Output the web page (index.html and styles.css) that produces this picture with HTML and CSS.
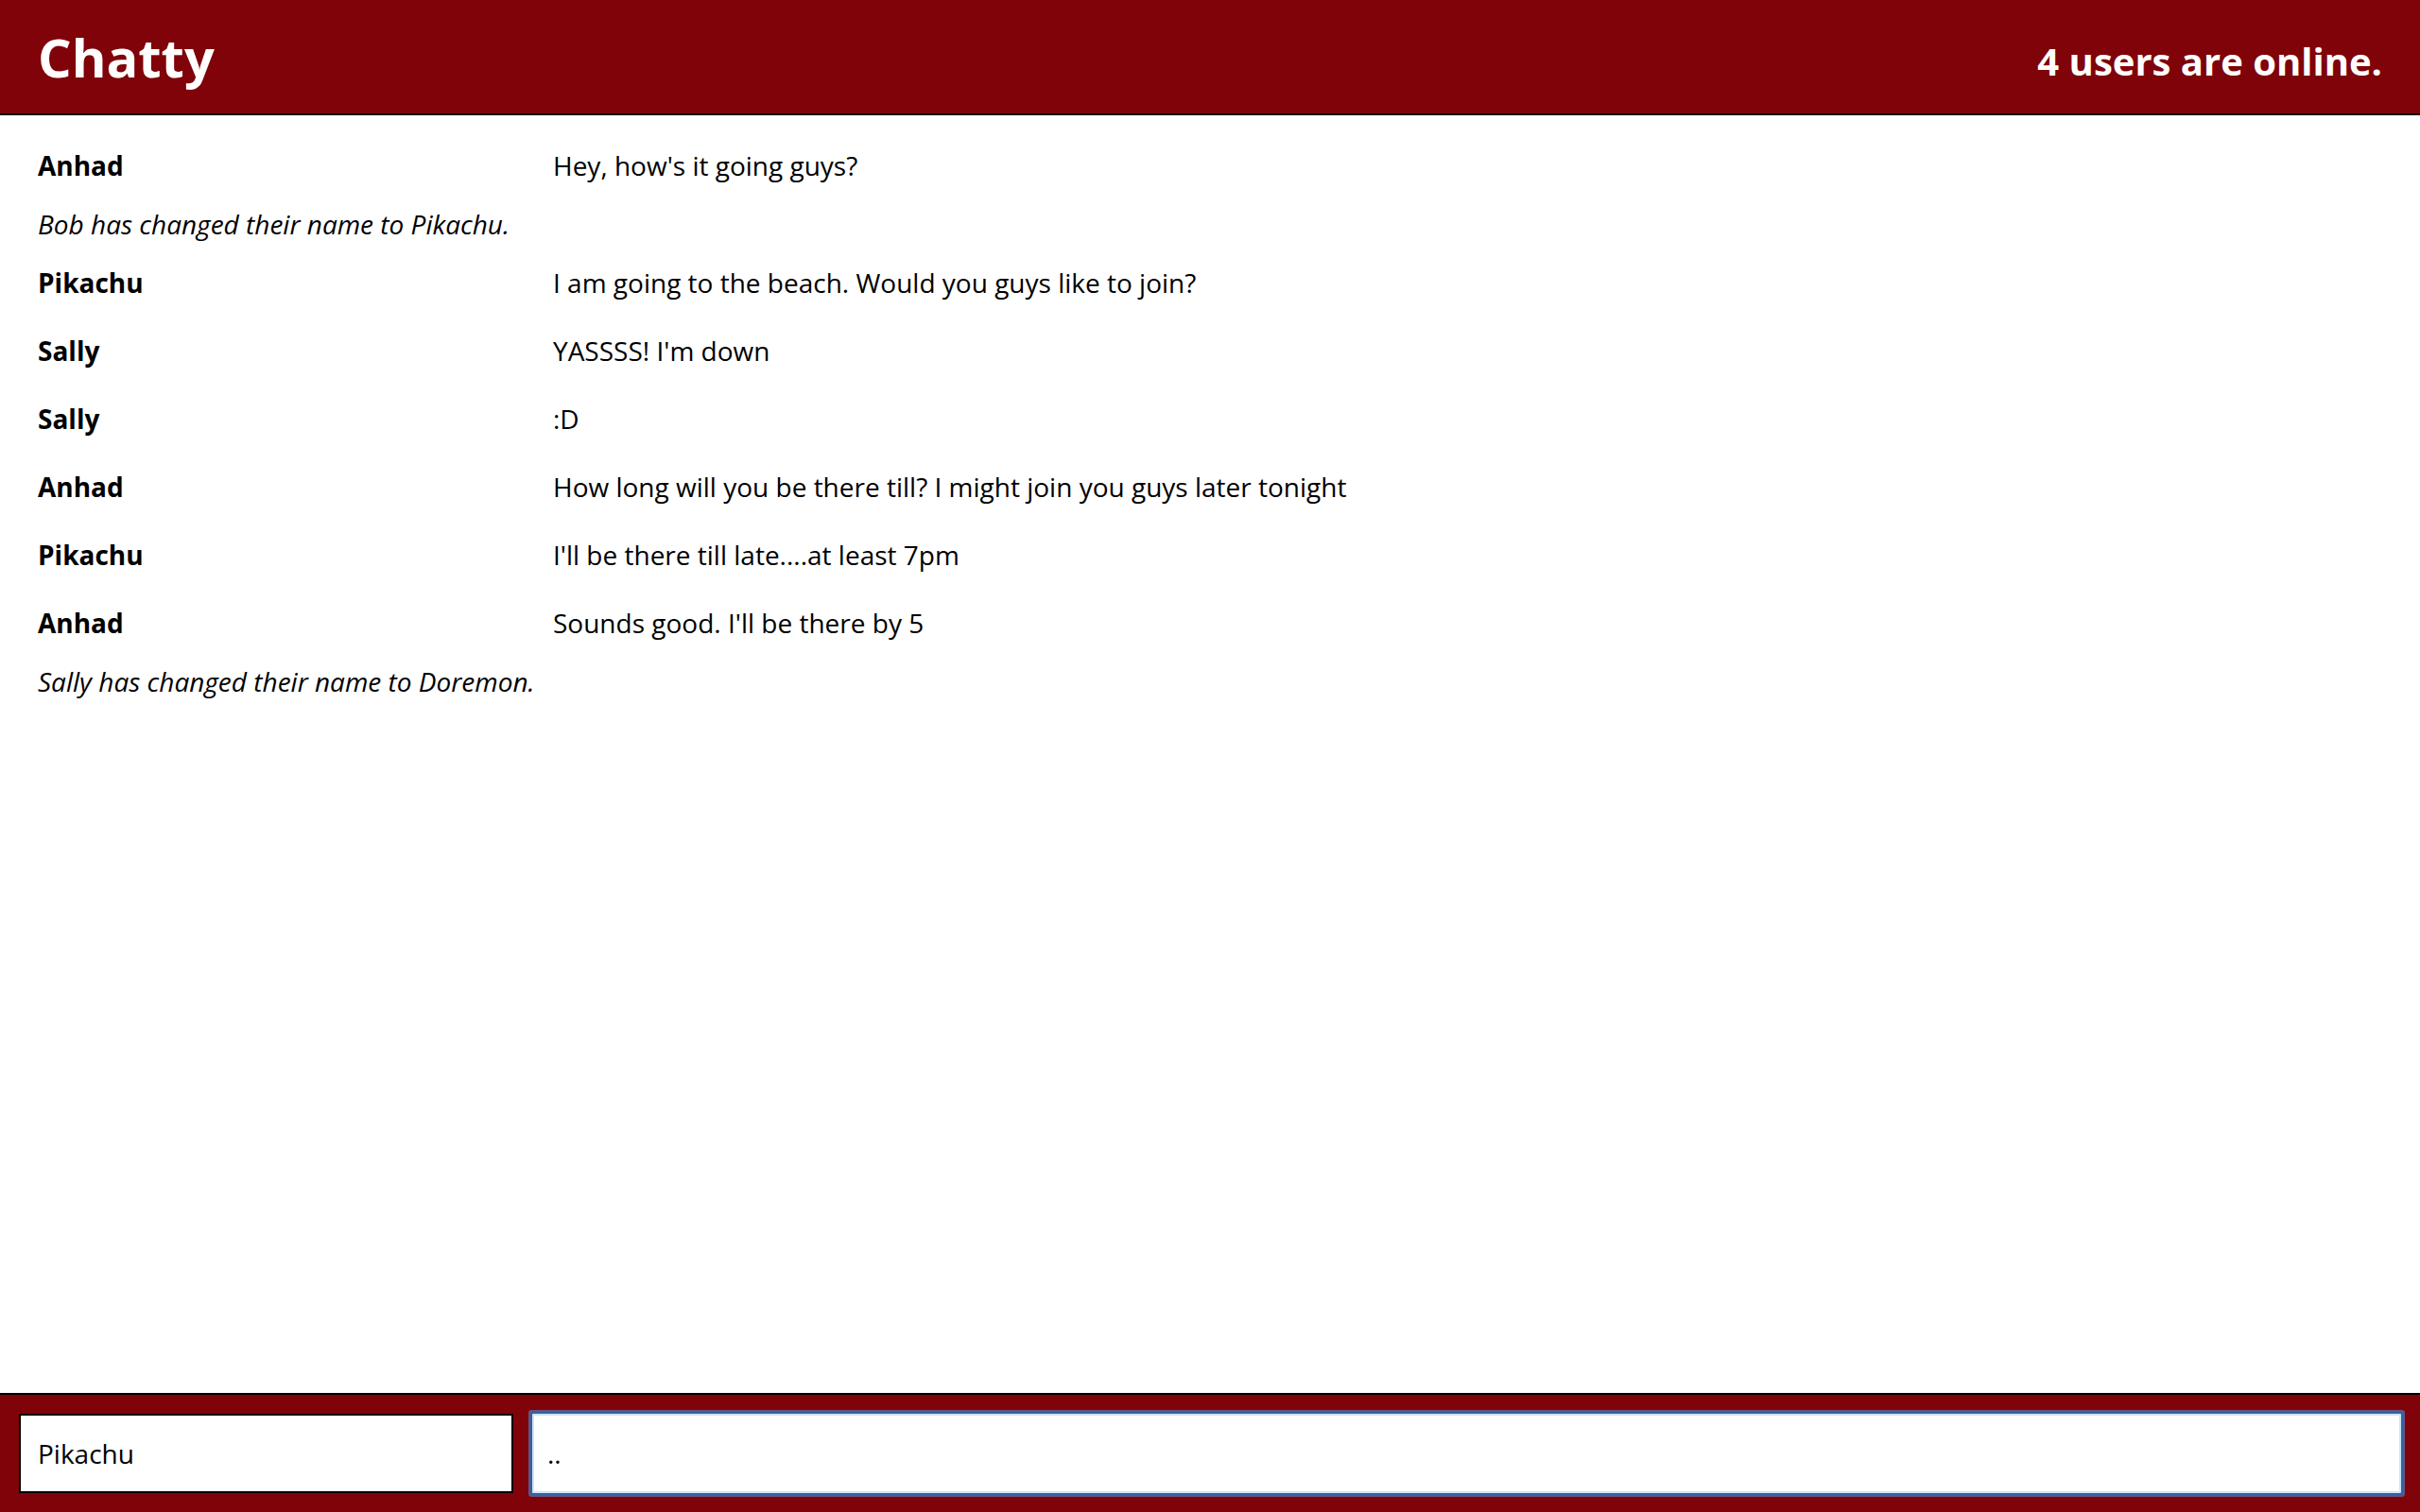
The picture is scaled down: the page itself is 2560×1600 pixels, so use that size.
FILE: index.html
```html
<!DOCTYPE html>
<html lang="en">
<head>
<meta charset="utf-8">
<title>Chatty</title>
<link rel="stylesheet" href="styles.css">
</head>
<body>
<div class="app">
  <nav class="navbar">
    <span class="brand">Chatty</span>
    <span class="online">4 users are online.</span>
  </nav>
  <main class="messages">
    <div class="message"><span class="username">Anhad</span><span class="content">Hey, how's it going guys?</span></div>
    <div class="system">Bob has changed their name to Pikachu.</div>
    <div class="message"><span class="username">Pikachu</span><span class="content">I am going to the beach. Would you guys like to join?</span></div>
    <div class="message"><span class="username">Sally</span><span class="content">YASSSS! I'm down</span></div>
    <div class="message"><span class="username">Sally</span><span class="content">:D</span></div>
    <div class="message"><span class="username">Anhad</span><span class="content">How long will you be there till? I might join you guys later tonight</span></div>
    <div class="message"><span class="username">Pikachu</span><span class="content">I'll be there till late....at least 7pm</span></div>
    <div class="message"><span class="username">Anhad</span><span class="content">Sounds good. I'll be there by 5</span></div>
    <div class="system">Sally has changed their name to Doremon.</div>
  </main>
  <footer class="chatbar">
    <input class="chatbar-username" type="text" value="Pikachu">
    <input class="chatbar-message" type="text" value="..">
  </footer>
</div>
</body>
</html>
```
FILE: styles.css
```css
* { box-sizing: border-box; }
html, body { margin: 0; padding: 0; }
body {
  font-family: "Open Sans", "Liberation Sans", sans-serif;
  color: #000;
  background: #fff;
}
.app {
  display: flex;
  flex-direction: column;
  height: 1600px;
}
.navbar {
  height: 122px;
  flex: 0 0 122px;
  background: #7f0309;
  border-bottom: 2px solid #000;
  color: #fff;
  display: flex;
  align-items: center;
  justify-content: space-between;
  padding: 0 40px;
  font-weight: 700;
}
.brand {
  font-size: 56px;
  line-height: 1;
}
.online {
  font-size: 40px;
  line-height: 1;
  padding-top: 9px;
}
.messages {
  flex: 1 1 auto;
  padding: 17px 40px;
  font-size: 28px;
  line-height: 38px;
}
.message {
  display: flex;
  padding: 17px 0;
}
.username {
  flex: 0 0 545px;
  font-weight: 700;
}
.content { flex: 1 1 auto; }
.system {
  font-style: italic;
  padding: 7px 0;
}
.chatbar {
  flex: 0 0 126px;
  background: #7f0309;
  border-top: 2px solid #000;
  display: flex;
  gap: 20px;
  padding: 20px;
}
.chatbar input {
  font-family: "Open Sans", "Liberation Sans", sans-serif;
  font-size: 28px;
  height: 84px;
  background: #fff;
  color: #000;
  outline: none;
  margin: 0;
}
.chatbar-username {
  flex: 0 0 523px;
  border: 2px solid #000;
  padding: 0 18px;
}
.chatbar-message {
  flex: 1 1 auto;
  border: 2px solid #d3e3f5;
  padding: 0 14px;
  box-shadow: 0 0 0 2px #2e64a6, 0 0 0 4px rgba(96, 110, 170, 0.75);
  border-radius: 1px;
}
```
